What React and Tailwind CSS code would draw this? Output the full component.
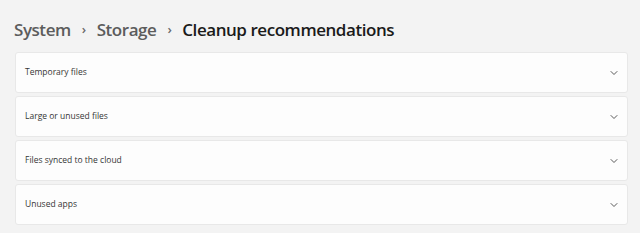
import React from 'react'

const Chevron = () => (
  <svg width="10" height="10" viewBox="0 0 10 10" fill="none" className="text-[#5a5a5a]">
    <path d="M2 3.5 L5 6.5 L8 3.5" stroke="currentColor" strokeWidth="1" strokeLinecap="round" strokeLinejoin="round" />
  </svg>
)

const App = () => {
  const items = ['Temporary files', 'Large or unused files', 'Files synced to the cloud', 'Unused apps']

  return (
    <div className="w-[640px] h-[233px] bg-[#f3f3f3] overflow-hidden" style={{ fontFamily: '"Open Sans", "Noto Sans", sans-serif' }}>
      {/* Breadcrumb */}
      <div className="flex items-center h-[52px] pl-[14px] pt-[8px] text-[17px] font-semibold tracking-[-0.45px]">
        <span className="text-[#5c5c5c]">System</span>
        <span className="text-[#6a6a6a] text-[13px] mx-[11px]">›</span>
        <span className="text-[#5c5c5c]">Storage</span>
        <span className="text-[#6a6a6a] text-[13px] mx-[11px]">›</span>
        <span className="text-[#1a1a1a]">Cleanup recommendations</span>
      </div>

      {/* Cards */}
      <div className="flex flex-col gap-[3px] pl-[15px] pr-[12px]">
        {items.map((item, index) => (
          <div
            key={index}
            className="h-[41px] flex items-center justify-between bg-[#fdfdfd] border border-[#e8e8e8] rounded-[3px] pl-[9px] pr-[8px]"
          >
            <span className="text-[8.5px] text-[#363636]">{item}</span>
            <Chevron />
          </div>
        ))}
      </div>
    </div>
  )
}

export default App
